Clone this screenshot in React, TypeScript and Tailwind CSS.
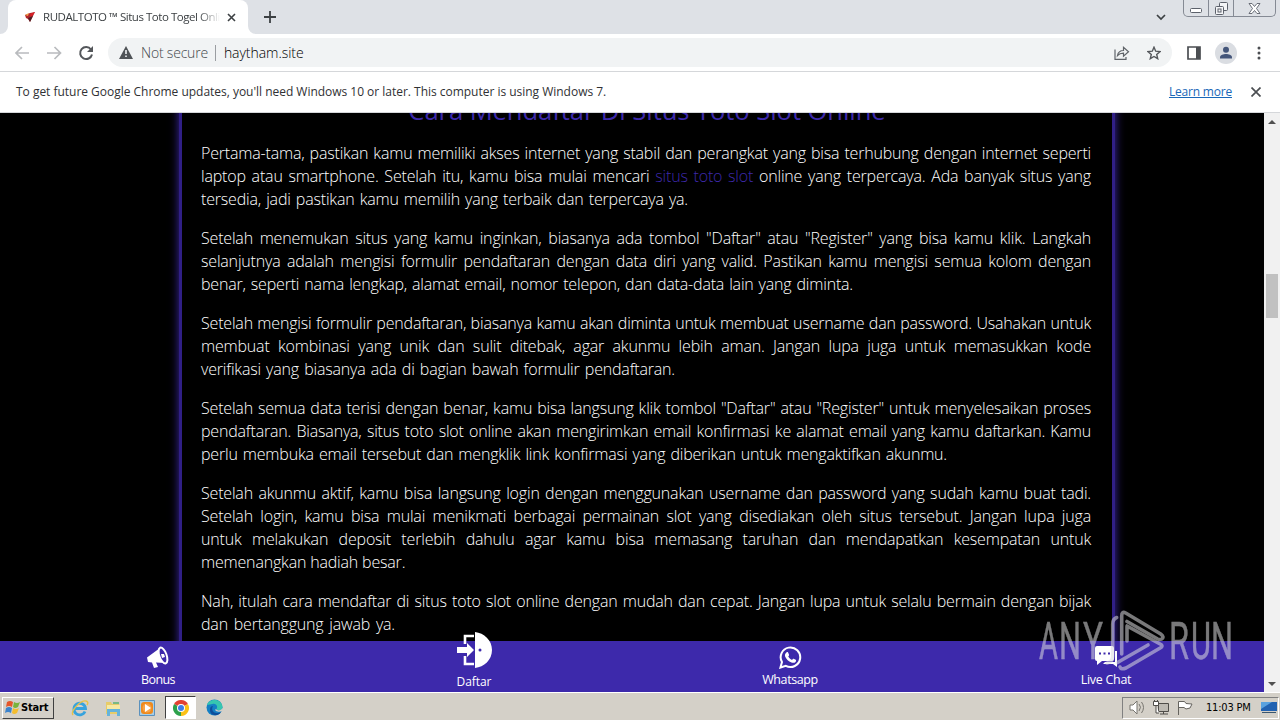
import type { ReactNode } from "react";

interface Line {
  text: ReactNode;
  width?: number;
}

const paragraphs: Line[][] = [
  [
    { text: "Pertama-tama, pastikan kamu memiliki akses internet yang stabil dan perangkat yang bisa terhubung dengan internet seperti" },
    {
      text: (
        <>
          laptop atau smartphone. Setelah itu, kamu bisa mulai mencari <a className="text-[#3d29ab]">situs toto slot</a> online yang terpercaya. Ada banyak situs yang
        </>
      ),
    },
    { text: "tersedia, jadi pastikan kamu memilih yang terbaik dan terpercaya ya.", width: 487 },
  ],
  [
    { text: 'Setelah menemukan situs yang kamu inginkan, biasanya ada tombol "Daftar" atau "Register" yang bisa kamu klik. Langkah' },
    { text: "selanjutnya adalah mengisi formulir pendaftaran dengan data diri yang valid. Pastikan kamu mengisi semua kolom dengan" },
    { text: "benar, seperti nama lengkap, alamat email, nomor telepon, dan data-data lain yang diminta.", width: 652 },
  ],
  [
    { text: "Setelah mengisi formulir pendaftaran, biasanya kamu akan diminta untuk membuat username dan password. Usahakan untuk" },
    { text: "membuat kombinasi yang unik dan sulit ditebak, agar akunmu lebih aman. Jangan lupa juga untuk memasukkan kode" },
    { text: "verifikasi yang biasanya ada di bagian bawah formulir pendaftaran.", width: 474 },
  ],
  [
    { text: 'Setelah semua data terisi dengan benar, kamu bisa langsung klik tombol "Daftar" atau "Register" untuk menyelesaikan proses' },
    { text: "pendaftaran. Biasanya, situs toto slot online akan mengirimkan email konfirmasi ke alamat email yang kamu daftarkan. Kamu" },
    { text: "perlu membuka email tersebut dan mengklik link konfirmasi yang diberikan untuk mengaktifkan akunmu.", width: 746 },
  ],
  [
    { text: "Setelah akunmu aktif, kamu bisa langsung login dengan menggunakan username dan password yang sudah kamu buat tadi." },
    { text: "Setelah login, kamu bisa mulai menikmati berbagai permainan slot yang disediakan oleh situs tersebut. Jangan lupa juga" },
    { text: "untuk melakukan deposit terlebih dahulu agar kamu bisa memasang taruhan dan mendapatkan kesempatan untuk" },
    { text: "memenangkan hadiah besar.", width: 202 },
  ],
  [
    { text: "Nah, itulah cara mendaftar di situs toto slot online dengan mudah dan cepat. Jangan lupa untuk selalu bermain dengan bijak" },
    { text: "dan bertanggung jawab ya.", width: 194 },
  ],
];

const TabStrip = () => (
  <div className="relative flex h-[34px] items-end bg-[#dee1e6]">
    <div className="relative ml-2 flex h-[34px] w-[240px] items-center rounded-t-lg bg-white pl-[17px] pr-[12px]">
      <svg className="absolute -left-2 bottom-0" width="8" height="8"><path d="M8 0v8H0a8 8 0 0 0 8-8z" fill="#fff" /></svg>
      <svg className="absolute -right-2 bottom-0" width="8" height="8"><path d="M0 0v8h8a8 8 0 0 1-8-8z" fill="#fff" /></svg>
      <svg width="10" height="10" viewBox="0 0 10 10">
        <path d="M0 3l5-2 5-1-2 4-3 6-2-3-2-1z" fill="#b3262a" />
        <path d="M0 3l4-2-1 3z" fill="#f0a04b" />
        <path d="M5 2l5-2-4 5z" fill="#dc1f26" />
        <path d="M3 6l5-2-3 6z" fill="#4a1f24" />
      </svg>
      <span className="ml-2 w-[177px] overflow-hidden whitespace-nowrap text-[11.5px] tracking-[-0.46px] text-[#3c4043] [mask-image:linear-gradient(to_right,#000_88%,transparent)]">
        RUDALTOTO ™ Situs Toto Togel Online
      </span>
      <svg className="ml-auto shrink-0" width="9" height="9"><path d="M1 1l7 7M8 1l-7 7" stroke="#3c4043" strokeWidth="1.6" /></svg>
    </div>
    <svg className="mb-[11px] ml-4" width="12" height="12"><path d="M6 0v12M0 6h12" stroke="#3c4043" strokeWidth="1.8" /></svg>
    <svg className="mb-[13px] ml-auto mr-[17px]" width="10" height="8"><path d="M1 2l4 4 4-4" fill="none" stroke="#3c4043" strokeWidth="1.7" /></svg>
    <div className="mb-[17px] mr-1 flex h-[17px] w-[93px] rounded-b-[5px] border border-t-0 border-[#858a94]">
      <div className="flex w-[25px] items-end justify-center border-r border-[#858a94] pb-[3px]">
        <svg width="12" height="5"><rect x=".5" y=".5" width="11" height="4" rx="1" fill="#fff" stroke="#5c616b" /></svg>
      </div>
      <div className="flex w-[25px] items-center justify-center border-r border-[#858a94]">
        <svg width="13" height="13" fill="#f4f5f7" stroke="#5c616b">
          <rect x="4.500" y=".5" width="8" height="8" rx="1" />
          <rect x=".5" y="4.500" width="8" height="8" rx="1" />
          <rect x="3" y="7" width="3" height="3" />
        </svg>
      </div>
      <div className="flex flex-1 items-center justify-center">
        <svg width="13" height="11"><path d="M1 .5h3l2.500 3 2.500-3h3L8.500 5.500l3.500 5H9l-2.500-3-2.500 3H1l3.500-5z" fill="#fff" stroke="#5c616b" strokeWidth=".9" /></svg>
      </div>
    </div>
  </div>
);

const Toolbar = () => (
  <div className="flex h-[38px] items-center border-b border-[#d5d7da] bg-white">
    <svg className="ml-[15px]" width="15" height="14" fill="none" stroke="#b9bbbe" strokeWidth="1.7"><path d="M14 7H1.500M7 1L1 7l6 6" /></svg>
    <svg className="ml-[17px]" width="15" height="14" fill="none" stroke="#b9bbbe" strokeWidth="1.7"><path d="M0 7h13M7.500 1l6 6-6 6" /></svg>
    <svg className="ml-[16px]" width="16" height="16" viewBox="0 0 16 16"><path d="M13 4.500A6 6 0 1 0 14 9.500" fill="none" stroke="#54575b" strokeWidth="2" /><path d="M15 1v6H9z" fill="#54575b" /></svg>
    <div className="ml-[14px] flex h-[29px] w-[1064px] items-center rounded-full bg-[#f1f3f4] pl-[11px] pr-[11px]">
      <svg width="14" height="13"><path d="M7 0l7 13H0z" fill="#4f5357" /><path d="M7 4v4M7 9.500v1.500" stroke="#f1f3f4" strokeWidth="1.600" /></svg>
      <span className="ml-2 text-[14px] font-light tracking-[-0.2px] text-[#44484c]">Not secure</span>
      <span className="ml-[7px] h-4 w-px bg-[#9a9da1]" />
      <span className="ml-2 text-[14px] font-light tracking-[-0.05px] text-black">haytham.site</span>
      <svg className="ml-auto" width="16" height="14" fill="none" stroke="#5f6368" strokeWidth="1.200"><path d="M1 3.500v9.800h11v-2.300M3.500 9.500c.6-3.500 3-5 6-5V1.300l5 4.500-5 4.300V7.200c-2.800 0-4.500.6-6 2.300z" /></svg>
      <svg className="ml-[17px]" width="14" height="14" viewBox="0 0 14 14"><path d="M7 1.200l1.700 4 4.300.4-3.300 2.900 1 4.200L7 10.500l-3.700 2.200 1-4.200L1 5.600l4.300-.4z" fill="none" stroke="#54575b" strokeWidth="1.400" /></svg>
    </div>
    <svg className="ml-[15px]" width="14" height="14"><path d="M1 1h12v12H1z" fill="#fff" stroke="#4b4e52" strokeWidth="1.700" /><path d="M9 1h4v12H9z" fill="#4b4e52" /></svg>
    <svg className="ml-[14px]" width="22" height="22"><circle cx="11" cy="11" r="11" fill="#dadde2" /><circle cx="11" cy="7.800" r="3" fill="#44567a" /><path d="M5 16.500v-1.300c0-2 3.500-3.200 6-3.200s6 1.200 6 3.200v1.300z" fill="#44567a" /></svg>
    <svg className="ml-[20px]" width="4" height="14" fill="#4b4e52"><circle cx="2" cy="2" r="1.500" /><circle cx="2" cy="7" r="1.500" /><circle cx="2" cy="12" r="1.500" /></svg>
  </div>
);

const Article = () => (
  <div className="ml-[179px] h-[560px] w-[936px] border-x-[3px] border-[#301f86] px-[19px] shadow-[0_0_9px_#3d29ab]">
    <h2 className="-mt-[20px] h-[49px] whitespace-nowrap text-center text-[25.6px] leading-[36px] font-medium tracking-[-0.08px] text-[#3d29ab]">
      Cara Mendaftar Di Situs Toto Slot Online
    </h2>
    <div className="space-y-4">
      {paragraphs.map((lines, i) => (
        <div key={i}>
          {lines.map((line, j) => (
            <p key={j} className="h-[23px] w-[890px] whitespace-nowrap text-[16px] leading-[23px] font-light tracking-[-0.18px] text-white [text-align-last:justify]" style={line.width ? { width: line.width } : undefined}>
              {line.text}
            </p>
          ))}
        </div>
      ))}
    </div>
  </div>
);

const BottomNav = () => (
  <div className="absolute bottom-0 left-0 grid h-[51px] w-[1264px] grid-cols-4 bg-[#3d29ab] text-[12.5px] leading-4 text-white">
    <div className="flex flex-col items-center pt-[5px]">
      <svg width="24" height="22" viewBox="0 0 24 22" fill="#fff">
        <path d="M1 11.500L14 2l5 15-9-.5 2 4.500-4 1-2-5.500-4-.5z" />
        <ellipse cx="17" cy="9.500" rx="3.600" ry="8.300" transform="rotate(-20 17 9.500)" fill="#3d29ab" stroke="#fff" strokeWidth="2" />
        <path d="M15 8l3 0 1 3-3 1z" />
      </svg>
      <span className="mt-[4px] tracking-[-0.6px]">Bonus</span>
    </div>
    <div className="flex flex-col items-center">
      <svg className="-mt-[9px]" width="36" height="36" viewBox="0 0 36 36">
        <path d="M18 4H9v8M9 24v8h9" fill="none" stroke="#fff" strokeWidth="2.600" />
        <path d="M1 15h10v-4l7 7-7 7v-4H1zM19 0c9 1 17 8 17 18s-8 17-17 18z" fill="#fff" />
        <circle cx="24" cy="18" r="1.500" fill="#3d29ab" />
      </svg>
      <span className="mt-[6px] text-[12px] tracking-[-0.05px]">Daftar</span>
    </div>
    <div className="flex flex-col items-center pt-[5px]">
      <svg width="23" height="23" viewBox="0 0 24 24">
        <path d="M1.500 22.500l1.600-5.700a10.200 10.200 0 1 1 4 3.900z" fill="none" stroke="#fff" strokeWidth="2.100" />
        <path d="M8 6.500c.5-.3 1.200-.3 1.500.3l1 2.200c.2.500-.1.900-.9 1.800 1 1.900 2.100 2.900 4 3.700.8-.9 1.100-1.500 1.700-1.200l2.200 1.100c.6.400.3 1.600-.2 2.200-1 1-2.700 1.200-4.300.6-3.100-1.200-5.200-3.200-6.500-6-.7-1.700-.1-3.600 1.500-4.700z" fill="#fff" />
      </svg>
      <span className="mt-[3px] tracking-[-0.4px]">Whatsapp</span>
    </div>
    <div className="flex flex-col items-center pt-[5px]">
      <svg width="24" height="22" viewBox="0 0 24 22">
        <path d="M3 0h15q2 0 2 2v11q0 2-2 2H8l-5 4v-4q-2 0-2-2V2q0-2 2-2zM21 5h2v16l-4-3H9l2-2h10z" fill="#fff" />
        <path d="M5 6.500h2v2H5zM9.500 6.500h2v2h-2zM14 6.500h2v2h-2z" fill="#3d29ab" />
      </svg>
      <span className="mt-[4px] tracking-[-0.3px]">Live Chat</span>
    </div>
  </div>
);

const letters = [
  { char: "A", x: 3, width: 19 },
  { char: "N", x: 23, width: 22 },
  { char: "Y", x: 47, width: 20 },
  { char: "R", x: 133, width: 20 },
  { char: "U", x: 155, width: 20 },
  { char: "N", x: 175, width: 22 },
];

const Watermark = () => (
  <svg className="absolute left-[1036px] top-[608px] opacity-55" width="200" height="66" viewBox="0 0 200 66">
    <g fill="#dcdcdf" stroke="#dcdcdf" strokeWidth=".5" fontFamily="Roboto" fontSize="52">
      {letters.map((l) => (
        <text key={l.x} x={l.x} y="51" textLength={l.width} lengthAdjust="spacingAndGlyphs">{l.char}</text>
      ))}
    </g>
    <g fill="none" stroke="#dcdcdf" strokeWidth="3.6" strokeLinejoin="round" strokeLinecap="round">
      <path d="M71 55q5.700-1 5.700-7V16q0-5 4-6.500" />
      <path d="M85.700 46V8q0-5 4-3l35 21q4 3 1 5-2 1-4 0L91 13.500" />
      <path d="M91 18v15M91 18l34 18.500q2 1.500 0 3L90 60q-5 2-6-1M81.500 54.500L112 37" />
    </g>
  </svg>
);

const ScrollBar = () => (
  <div className="flex w-4 flex-col items-center bg-[#f1f1f1]">
    <svg className="mt-[7px]" width="8" height="5"><path d="M4 0l4 4H0z" fill="#505050" /></svg>
    <div className="mt-[149px] h-[44px] w-3 bg-[#c1c1c1]" />
    <svg className="mb-[5px] mt-auto" width="8" height="5"><path d="M0 0h8L4 4z" fill="#505050" /></svg>
  </div>
);

const Taskbar = () => (
  <div className="flex h-7 items-center border-t border-white bg-[#d4d0c8]">
    <div className="ml-[2px] mt-[2px] flex h-[22px] w-[52px] items-center border border-b-[#404040] border-l-white border-r-[#404040] border-t-white pl-[2px]">
      <svg width="15" height="15" viewBox="0 0 15 15">
        <path d="M2 2q3-2 6 0L7 7Q4 5 1 7z" fill="#e5562a" />
        <path d="M9 2q3 2 6 0l-2 5q-3 2-5 0z" fill="#79b33b" />
        <path d="M1 8q3-2 6 0l-1 5q-3-2-6 0z" fill="#3b83cd" />
        <path d="M8 8q3 2 6 0l-2 5q-3 2-5 0z" fill="#f4bd2e" />
      </svg>
      <span className="ml-[1px] mt-px font-['DejaVu_Sans_Condensed','DejaVu_Sans'] text-[11px] font-bold tracking-[-0.15px] text-black">Start</span>
    </div>
    <svg className="ml-[17px] mt-[2px]" width="18" height="18" viewBox="0 0 18 18">
      <path d="M14 12.500A5.800 5.800 0 1 1 14.500 9.500H4" fill="none" stroke="#37a3dd" strokeWidth="2.800" />
      <path d="M2 16C-1 12 10 1 15 2q3 1 1 4" fill="none" stroke="#e7c248" strokeWidth="1.400" />
    </svg>
    <svg className="ml-[16px] mt-[2px]" width="16" height="16" viewBox="0 0 16 16">
      <path d="M1 2h5l1 2h7v10H1z" fill="#e7cc69" /><path d="M2 5h13v6H2z" fill="#f7e9a3" />
      <path d="M2 9h13v7h-3v-4H5v4H2z" fill="#65b3db" /><path d="M8 2h6v2H8z" fill="#79b984" />
    </svg>
    <svg className="ml-[18px] mt-[2px]" width="16" height="16">
      <path d="M.5.5h15v15H.5z" fill="#a5cee8" stroke="#5b91bd" /><rect x="2" y="2" width="12" height="12" rx="3" fill="#ee8a1d" /><circle cx="8" cy="8" r="4.500" fill="#f7a347" /><path d="M6 4l6 4-6 4z" fill="#fff" />
    </svg>
    <div className="ml-[10px] mt-[2px] flex h-[23px] w-[31px] items-center justify-center border border-b-white border-l-[#404040] border-r-white border-t-[#404040] bg-white">
      <svg width="16" height="16" viewBox="0 0 16 16">
        <path d="M8 8L1.070 4A8 8 0 0 1 14.930 4z" fill="#e34133" />
        <path d="M8 8l6.930-4A8 8 0 0 1 8 16z" fill="#fbc116" />
        <path d="M8 8v8A8 8 0 0 1 1.070 4z" fill="#2da14c" />
        <circle cx="8" cy="8" r="4" fill="#fff" /><circle cx="8" cy="8" r="3" fill="#3f7de8" />
      </svg>
    </div>
    <svg className="ml-[10px] mt-[2px]" width="17" height="17" viewBox="0 0 17 17">
      <circle cx="8.500" cy="8.500" r="8" fill="#147fc4" />
      <path d="M1 6C3-1 16-1 16.500 8c0 4-5 4-6 2 2-3-1-6-4-5z" fill="#36c6b0" />
      <path d="M7 7c-3 5 3 9 8 6-3 5-11 4-11-2 0-3 1-4 3-4z" fill="#0e4e9b" />
      <path d="M10 10c1 2 5 2 6.500-1l.5 3q-6 2-8-1z" fill="#d4d0c8" />
    </svg>
    <div className="ml-auto mr-[1px] mt-[2px] flex h-[22px] w-[157px] items-center border border-b-white border-l-[#808080] border-r-white border-t-[#808080] pl-[6px]">
      <svg width="17" height="15" fill="#fff" stroke="#77756f"><path d="M1 5h3l4-4v13l-4-4H1z" /><path d="M10 4q3 3 0 7M12.500 2q4 5.500 0 11" fill="none" /></svg>
      <svg className="ml-[7px]" width="16" height="15" stroke="#4f4d49"><path d="M5.500 3.500h10v8h-10z" fill="#bdbab3" /><path d="M.5 1.500h5v4h-5zM3 5v8h3M7 14h8M10.500 11.500V14M1.500 0v2M4.500 0v2" fill="#fff" /></svg>
      <svg className="ml-[8px]" width="16" height="15"><path d="M1.500 15V1.500h6L9 3.500l6 .5-2 4-4 1-2-1.500H2" fill="#fff" stroke="#65635e" /></svg>
      <span className="ml-[13px] mt-px whitespace-nowrap font-['DejaVu_Sans_Condensed','DejaVu_Sans'] text-[11px] tracking-[-0.2px] text-black">11:03 PM</span>
      <svg className="ml-auto mr-[1px] shrink-0" width="16" height="13"><path d="M0 1h16v9H0z" fill="#2262b1" /><path d="M0 1h11L0 8z" fill="#5aa2df" /><path d="M1 11h14v1H1z" fill="#39566f" /></svg>
    </div>
  </div>
);

export default function App() {
  return (
    <div className="relative flex h-[720px] w-[1280px] flex-col overflow-hidden bg-black font-['Open_Sans','Noto_Sans',sans-serif]">
      <TabStrip />
      <Toolbar />
      <div className="flex h-[41px] items-center border-b border-[#d5d7da] bg-white pl-4 pr-[19px] text-[12px] text-[#303134]">
        <span className="tracking-[-0.02px]">To get future Google Chrome updates, you'll need Windows 10 or later. This computer is using Windows 7.</span>
        <a className="ml-auto mr-[19px] tracking-[-0.2px] text-[#1967b8] underline">Learn more</a>
        <svg width="10" height="10"><path d="M.5.5l9 9M9.500.5l-9 9" stroke="#4b4e52" strokeWidth="1.700" /></svg>
      </div>
      <div className="relative flex h-[579px]">
        <div className="h-full w-[1264px] overflow-hidden bg-black">
          <Article />
        </div>
        <ScrollBar />
        <BottomNav />
      </div>
      <Taskbar />
      <Watermark />
    </div>
  );
}
